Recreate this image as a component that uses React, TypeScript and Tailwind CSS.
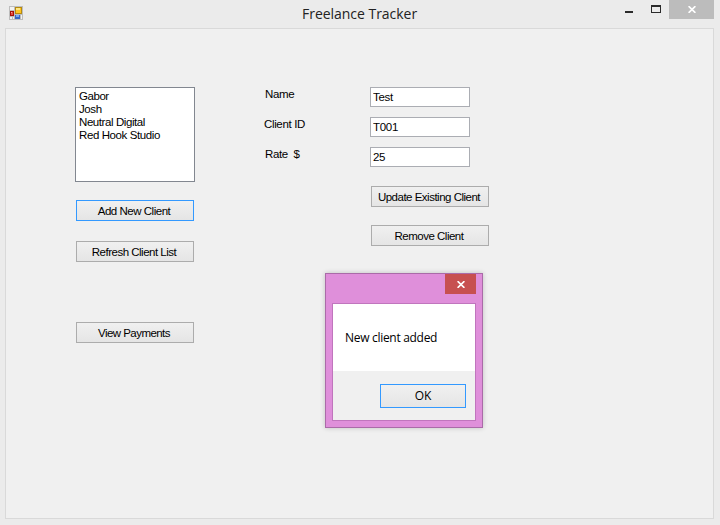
import React from "react";

const clients = [
  { name: "Gabor", tracking: "tracking-[-0.45px]" },
  { name: "Josh", tracking: "tracking-[-0.4px]" },
  { name: "Neutral Digital", tracking: "tracking-[-0.42px]" },
  { name: "Red Hook Studio", tracking: "tracking-[-0.4px]" },
];

function Button({ label, className = "border-[#acacac]" }: { label: string; className?: string }) {
  return (
    <button
      className={`flex h-[21px] w-[118px] items-center justify-center whitespace-pre border bg-gradient-to-b from-[#f0f0f0] to-[#e5e5e5] pr-0.5 pt-px leading-[13px] ${className}`}
    >
      {label}
    </button>
  );
}

function Field({ value }: { value: string }) {
  return (
    <input
      readOnly
      value={value}
      className="block h-5 w-[100px] border border-[#abadb3] bg-white pl-[2px] text-[11.5px] tracking-[-0.3px] outline-none"
    />
  );
}

function Cross() {
  return (
    <svg width="8" height="7" viewBox="0 0 8 7" fill="none" stroke="white" strokeWidth="1.7">
      <path d="M.6 .2 7.4 6.8M7.4 .2 .6 6.8" />
    </svg>
  );
}

function AppIcon() {
  return (
    <svg width="14" height="14" viewBox="0 0 14 14" shapeRendering="crispEdges">
      <path fill="#bdbdbd" d="M0 0h14v14H0z" />
      <path fill="#f2f2f2" d="M1 1h4v3H1zM1 11h2v2H1zM4 11h1v2H4zM12 9h1v4h-1z" />
      <path fill="#a51208" d="M1 5h4v5H1z" />
      <path fill="#e84a40" d="M2 6h2v3H2z" />
      <path fill="#f5aaa0" d="M2 6h1v1H2z" />
      <path fill="#b58a10" d="M6 1h7v7H6z" />
      <path fill="#ffc420" d="M7 2h5v5H7z" />
      <path fill="#ffe680" d="M7 2h4v2H7z" />
      <path fill="#3567c4" d="M6 9h5v4H6z" />
      <path fill="#79a7ef" d="M7 9h3v2H7z" />
    </svg>
  );
}

export default function App() {
  return (
    <div className="relative h-[525px] w-[720px] overflow-hidden bg-[#ebebeb] px-[5px] font-['Liberation_Sans',sans-serif] text-[11.5px] leading-[13px] text-black">
      <header className="flex h-7 items-start">
        <div className="w-[297px] pl-1 pt-1.5">
          <AppIcon />
        </div>
        <h1 className="w-[308px] whitespace-nowrap pt-1 font-['Open_Sans',sans-serif] text-[14px] leading-5 tracking-[-0.03px] text-[#222]">
          Freelance Tracker
        </h1>
        <div className="flex w-[59px] items-start pl-[15px]">
          <span className="mt-[11px] h-0.5 w-2 bg-[#2a2a2a]" />
          <span className="ml-[18px] mt-[5px] h-2 w-2.5 shrink-0 border border-t-2 border-[#2a2a2a]" />
        </div>
        <div className="flex h-[19px] w-[45px] items-center justify-center bg-[#bcbcbc]">
          <Cross />
        </div>
      </header>

      <main className="flex h-[491px] w-[709px] items-start border border-[#d9d9d9] bg-[#f0f0f0] pl-[69px] pt-[58px]">
        <section className="flex w-[189px] flex-col">
          <ul className="h-[95px] w-[120px] border border-[#828790] bg-white pl-[3px] pt-[2px]">
            {clients.map((c) => (
              <li key={c.name} className={c.tracking}>
                {c.name}
              </li>
            ))}
          </ul>
          <div className="ml-px mt-[18px] flex flex-col gap-5">
            <Button label="Add New Client" className="border-[#3399ff] tracking-[-0.48px]" />
            <Button label="Refresh Client List" className="border-[#acacac] tracking-[-0.5px]" />
          </div>
          <div className="ml-px mt-[60px]">
            <Button label="View Payments" className="border-[#acacac] tracking-[-0.55px]" />
          </div>
        </section>

        <section className="flex w-[106px] flex-col gap-[17px] whitespace-pre pl-px pt-px tracking-[-0.35px]">
          <span>Name</span>
          <span className="-ml-px">Client ID</span>
          <span>Rate  $</span>
        </section>

        <section className="flex flex-col">
          <div className="flex flex-col gap-2.5">
            <Field value="Test" />
            <Field value="T001" />
            <Field value="25" />
          </div>
          <div className="ml-px mt-[19px] flex flex-col gap-[18px]">
            <Button label="Update Existing Client" className="border-[#acacac] tracking-[-0.5px]" />
            <Button label="Remove Client" className="border-[#acacac] tracking-[-0.5px]" />
          </div>
        </section>
      </main>

      <div className="absolute left-[325px] top-[273px] flex h-[155px] w-[158px] flex-col border border-[#aa6ba8] bg-[#df8fda] px-1.5 shadow-[0_0_5px_rgba(0,0,0,0.2)]">
        <div className="flex h-[29px] justify-end">
          <div className="flex h-5 w-[31px] items-center justify-center bg-[#c75050]">
            <Cross />
          </div>
        </div>
        <div className="flex h-[118px] w-[144px] flex-col border border-[#c075bd] bg-white font-['Open_Sans',sans-serif] text-[12px]">
          <p className="h-[67px] whitespace-nowrap pl-3 pt-[26px] leading-4 tracking-[-0.3px]">New client added</p>
          <div className="flex flex-1 items-start justify-end bg-[#f0f0f0] pr-[9px] pt-[13px]">
            <button className="flex h-6 w-[86px] items-center justify-center border border-[#3399ff] bg-gradient-to-b from-[#f0f0f0] to-[#e5e5e5] pb-0.5">
              OK
            </button>
          </div>
        </div>
      </div>
    </div>
  );
}
